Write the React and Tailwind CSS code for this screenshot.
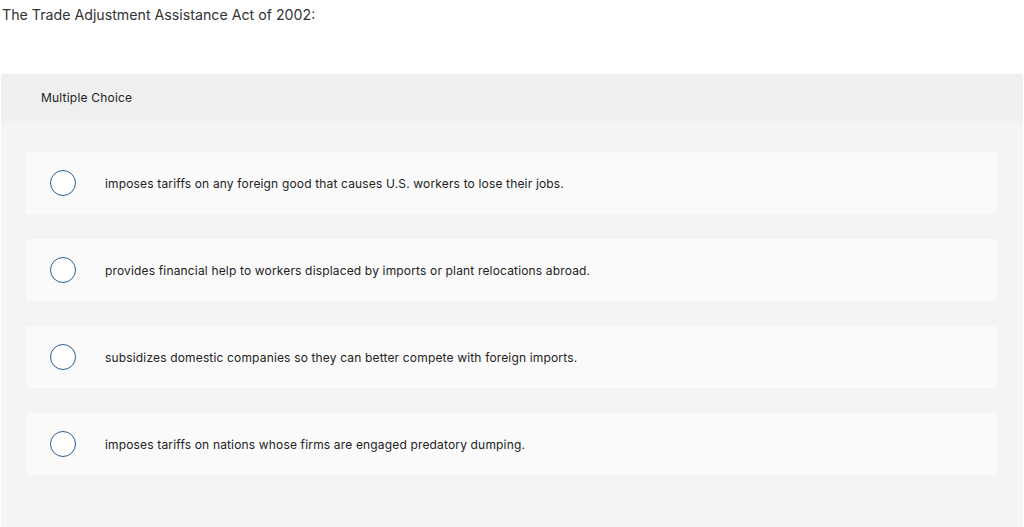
import React from 'react';

const choices = [
  'imposes tariffs on any foreign good that causes U.S. workers to lose their jobs.',
  'provides financial help to workers displaced by imports or plant relocations abroad.',
  'subsidizes domestic companies so they can better compete with foreign imports.',
  'imposes tariffs on nations whose firms are engaged predatory dumping.',
];

const App = () => {
  return (
    <div className="w-[1024px] h-[527px] overflow-hidden bg-white text-[#333]" style={{ fontFamily: 'Inter, "Open Sans", sans-serif' }}>
      {/* Question */}
      <div className="h-[74px] pl-[2px] pt-[5px] text-[14.2px] leading-[20px]">
        The Trade Adjustment Assistance Act of 2002:
      </div>

      {/* Answer panel */}
      <div className="mx-[1px] rounded-t-[3px] bg-[#f4f4f4] h-[460px]">
        <div className="h-[47px] bg-[#efefef] rounded-t-[3px] pl-[40px] pt-[15px] text-[12px] leading-[18px] tracking-[0.2px] text-[#222]">
          Multiple Choice
        </div>
        <div className="flex flex-col gap-[25px] pt-[31px] pl-[25px] pr-[26px]">
          {choices.map((choice, i) => (
            <div key={i} className="h-[62px] rounded-[3px] bg-[#fafafa] flex items-center">
              <span className="ml-[24px] w-[26px] h-[26px] rounded-full border-[1.5px] border-[#2b5f91] bg-white shrink-0" />
              <span className="ml-[29px] pt-[1px] text-[12px] leading-[16px] tracking-[0.16px] text-[#222]">{choice}</span>
            </div>
          ))}
        </div>
      </div>
    </div>
  );
};

export default App;
